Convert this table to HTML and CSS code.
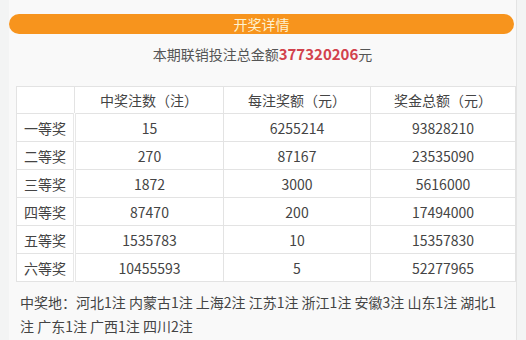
FILE: index.html
```html
<!DOCTYPE html>
<html lang="zh-CN">
<head>
<meta charset="utf-8">
<link rel="stylesheet" href="styles.css">
</head>
<body>
<div class="panel">
  <div class="bar">开奖详情</div>
  <div class="summary">本期联销投注总金额<span class="amount">377320206</span>元</div>
  <table class="prize">
    <colgroup><col class="c1"><col class="c2"><col class="c3"><col class="c4"></colgroup>
    <thead>
      <tr><th></th><th>中奖注数（注）</th><th>每注奖额（元）</th><th>奖金总额（元）</th></tr>
    </thead>
    <tbody>
      <tr><td>一等奖</td><td>15</td><td>6255214</td><td>93828210</td></tr>
      <tr><td>二等奖</td><td>270</td><td>87167</td><td>23535090</td></tr>
      <tr><td>三等奖</td><td>1872</td><td>3000</td><td>5616000</td></tr>
      <tr><td>四等奖</td><td>87470</td><td>200</td><td>17494000</td></tr>
      <tr><td>五等奖</td><td>1535783</td><td>10</td><td>15357830</td></tr>
      <tr><td>六等奖</td><td>10455593</td><td>5</td><td>52277965</td></tr>
    </tbody>
  </table>
  <div class="places">中奖地：河北1注 内蒙古1注 上海2注 江苏1注 浙江1注 安徽3注 山东1注 湖北1注 广东1注 广西1注 四川2注</div>
</div>
</body>
</html>
```
FILE: styles.css
```css
html, body {
  margin: 0;
  padding: 0;
  background: #f3f4f4;
}
body {
  font-family: "Noto Sans CJK SC", "Noto Sans", sans-serif;
  font-size: 14px;
  color: #444;
}
.panel {
  margin-left: 9px;
  width: 507px;
  padding-top: 14px;
  min-height: 326px;
  background: #f9f9f9;
  border-right: 1px solid #e4e4e4;
}
.bar {
  width: 505px;
  height: 20px;
  line-height: 20px;
  border-radius: 10px;
  background: #f7941d;
  color: #fdf1cf;
  text-align: center;
  font-size: 14px;
}
.summary {
  margin-top: 10px;
  height: 20px;
  line-height: 20px;
  text-align: center;
  color: #555;
}
.amount {
  color: #d2414c;
  font-weight: bold;
  font-size: 15px;
}
.prize {
  margin-top: 22px;
  margin-left: 7px;
  width: 499px;
  border-collapse: collapse;
  background: #fff;
  table-layout: fixed;
}
.c1 { width: 58px; }
.c2 { width: 149px; }
.c3 { width: 147px; }
.c4 { width: 145px; }
.prize th, .prize td {
  border: 1px solid #e3e3e3;
  text-align: center;
  font-weight: normal;
  padding: 0;
  color: #444;
  line-height: 20px;
}
.prize th {
  height: 26px;
}
.prize td {
  height: 27px;
}
.prize td:first-child {
  border-right: 3px double #e8e8e8;
}
.places {
  margin-left: 11px;
  margin-top: 8px;
  width: 488px;
  line-height: 24px;
  color: #444;
}
```
